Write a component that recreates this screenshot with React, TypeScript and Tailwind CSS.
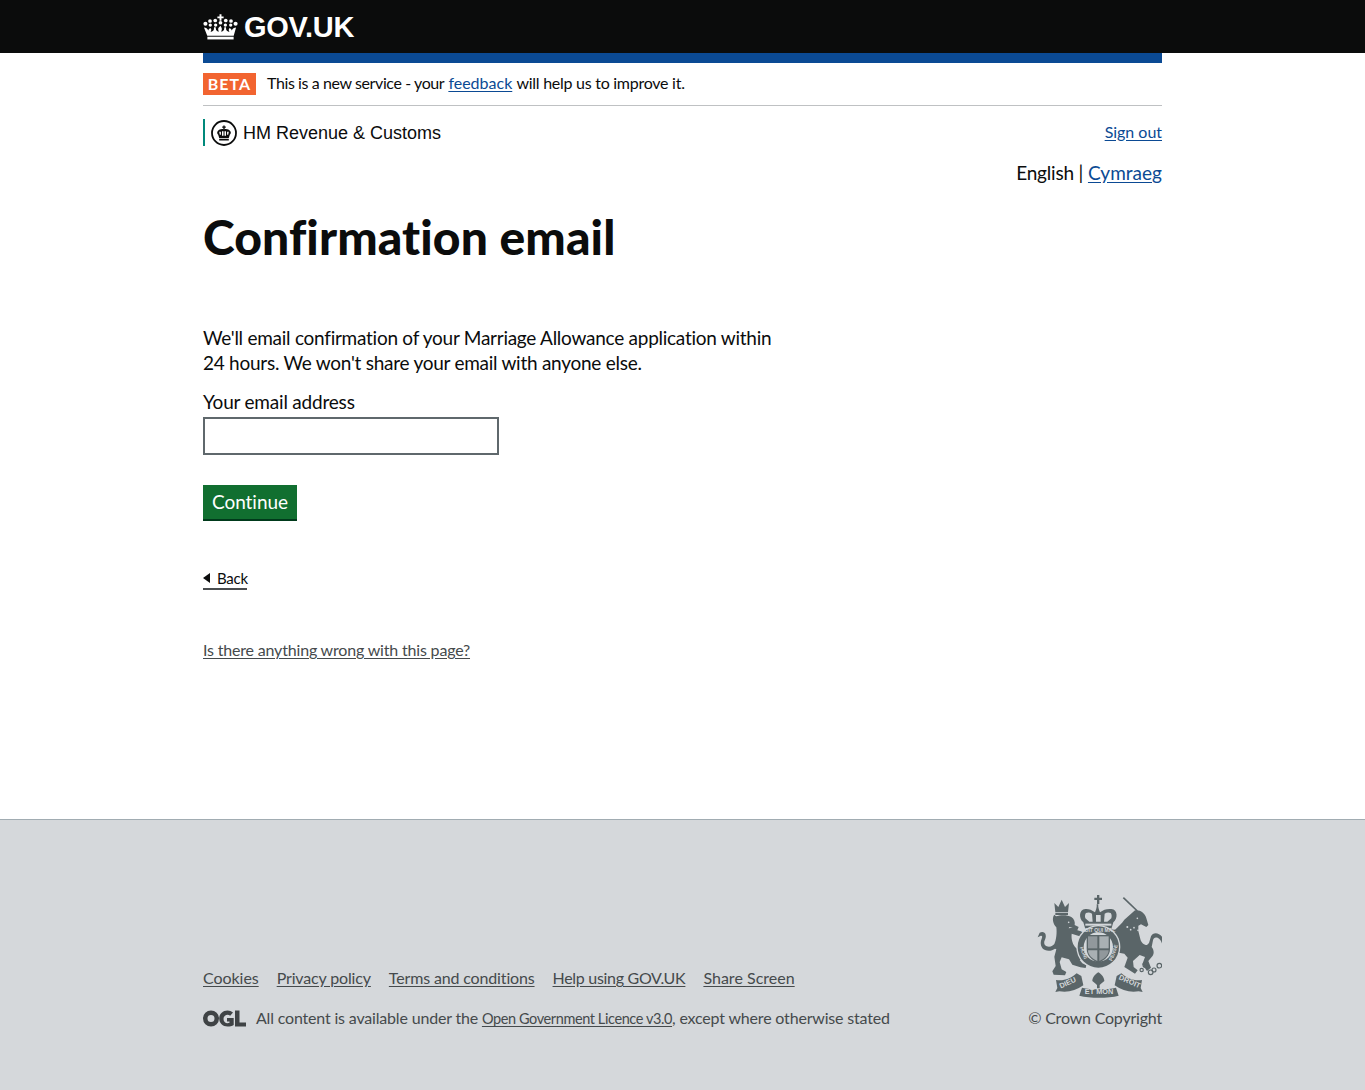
const Crown = ({ className }: { className?: string }) => (
  <svg viewBox="0 0 36 26" className={className} fill="currentColor">
    <path d="M17 0h2v2.200h2.200v1.900H19v2.400h-2V4.100h-2.200V2.200H17z" />
    <circle cx="18" cy="8.600" r="1.900" />
    <circle cx="12.600" cy="6.300" r="1.900" /><circle cx="23.400" cy="6.300" r="1.900" />
    <circle cx="7.200" cy="6.800" r="1.900" /><circle cx="28.800" cy="6.800" r="1.900" />
    <circle cx="2.500" cy="9.600" r="2.100" /><circle cx="33.500" cy="9.600" r="2.100" />
    <circle cx="7.500" cy="11" r="1.700" /><circle cx="28.500" cy="11" r="1.700" />
    <circle cx="13" cy="11" r="1.700" /><circle cx="23" cy="11" r="1.700" />
    <path d="M1 13.500c2 0 3.600 1.200 4.500 3 .3-1.500 1.200-2.400 2.600-2.300.7 1.400.4 2.800-.5 3.800 1.400 0 2.800-.8 3.500-2.200l.3-2.500h1.600l.4 2.500c.6 1.300 1.900 2.100 3.100 1.900-.8-1-1.100-2.200-.7-3.600L18 11.600l1.200 2.500c.4 1.400.1 2.600-.7 3.600 1.200.2 2.500-.6 3.100-1.900l.4-2.500h1.600l.3 2.500c.7 1.400 2.100 2.200 3.500 2.200-.9-1-1.200-2.400-.5-3.800 1.400-.1 2.300.8 2.600 2.300.9-1.800 2.500-3 4.500-3L31.600 22H4.400z" />
    <path d="M4.500 23h27v2.800h-27z" />
  </svg>
);

const HmrcCrest = () => (
  <svg viewBox="0 0 26 26" className="h-[26px] w-[26px] text-[#0b0c0c]" fill="none" stroke="currentColor">
    <circle cx="13" cy="13" r="12" strokeWidth="1.800" />
    <g fill="currentColor" stroke="none">
      <path d="M12.300 5.500h1.400v1.100h1.100v1.100h-1.100v1.500h-1.400V7.700h-1.100V6.600h1.100z" />
      <path d="M6.500 11.500c1.800-2.400 4.200-2.900 6.500-2.200 2.300-.7 4.700-.2 6.500 2.200.6 1.100.3 2.300-.7 3.300l-1.100 3.400H8.300l-1.100-3.400c-1-1-1.300-2.200-.7-3.300z" />
      <path d="M8.200 19h9.600v1.500H8.200z" />
    </g>
    <g fill="#ffffff" stroke="none">
      <path d="M8.200 11.800h1.700v3H8.800zM11 11.200h1.500v4.500H11zM13.500 11.200H15v4.500h-1.500zM16.100 11.800h1.700l-.6 3h-1.100z" />
    </g>
  </svg>
);

const RoyalArms = () => (
  <svg viewBox="48 30 378 312" className="h-[104px] w-[126px] text-[#5a6568]" fill="currentColor">
    {/* central crown */}
    <path d="M231 30h7v8h8v7h-8v12h-7V45h-8v-7h8z" />
    <path d="M196 72c-20 2-20 28-6 40l6 20h78l6-20c14-12 14-38-6-40-14-1-24 2-34 10-4-10-6-16-5-24h-5c1 8-1 14-5 24-10-8-20-11-30-10z" />
    <g fill="#d4d8db">
      <path d="M198 84c6-3 12-2 18 2l2 24h-10l-12-10c-2-6-1-13 2-16zM272 84c-6-3-12-2-18 2l-2 24h10l12-10c2-6 1-13-2-16zM228 90h14v20h-14z" />
    </g>
    <path d="M196 116h78v6h-78z" fill="#d4d8db" />
    {/* lion crown */}
    <path d="M103 54l12 12 10-22 10 22 12-12-3 28h-38z" />
    <path d="M106 84h38v6h-38z" />
    {/* lion */}
    <path d="M108 94c14-5 34-5 46 2 8 5 12 16 10 24l12 6-4 10 16 4-1 9-8 5-24-8c-2 18 4 34 14 44l20 9c6 6 8 14 4 22l-14 4 8 10 12 6-2 8-16-2-24-8-10-16-14-4-8-2-6 14 6 22 14 8-4 10-34-2-4-10 10-16-4-28 6-22-4-2c-8 6-20 8-30 4-12-6-16-20-10-34 4-8 0-10-4-8l-8 4 6-14c8-4 16-2 18 6 2 8-2 14-4 20-2 10 4 16 14 16 8 0 12-4 16-8 6-12 8-34 6-50-10-10-14-28-6-38z" />
    <g fill="#d4d8db">
      <circle cx="146" cy="112" r="2.500" />
      <path d="M158 128l-12 2 2-4z" />
    </g>
    {/* unicorn */}
    <path d="M310 38l42 40" fill="none" stroke="currentColor" strokeWidth="5" />
    <path d="M345 76c16-2 30 8 34 24l6 20-6 6-16-8-8 4 0 16 6 24c2 10 10 18 20 18l6-6 6-20c4-8 14-12 24-6 10 6 16 14 18 26l-2 12-6-2c0-12-6-22-14-26-8-2-12 0-14 8l-4 20c8 10 8 22 0 30l-10 12 8 20-12 10-14-20 8-22-16-6-20 18 2 18 12 10-8 10-32-20 10-28-10-12-32-6-4-20 14-16-4-10-24-6c-6-8-4-14 2-18l20 4c8-8 20-18 28-30z" />
    <g fill="#d4d8db">
      <circle cx="352" cy="100" r="2.500" />
      <circle cx="342" cy="128" r="2.500" />
      <circle cx="332" cy="134" r="2.500" />
      <circle cx="322" cy="126" r="3" />
      <circle cx="354" cy="136" r="2.500" />
    </g>
    <g fill="none" stroke="currentColor" strokeWidth="3.500">
      <circle cx="376" cy="240" r="7" />
      <circle cx="392" cy="262" r="7" />
      <circle cx="402" cy="255" r="6" />
      <circle cx="418" cy="242" r="7" />
      <circle cx="365" cy="255" r="5" />
    </g>
    {/* garter and shield */}
    <circle cx="235" cy="186" r="66" fill="#d4d8db" />
    <circle cx="235" cy="186" r="62" />
    <circle cx="235" cy="186" r="44" fill="#d4d8db" />
    <path d="M200 150h70v42c0 20-16 34-35 42-19-8-35-22-35-42z" />
    <g fill="#d4d8db">
      <path d="M204 154h28v36h-28z" opacity=".45" />
      <path d="M238 154h28v36h-28z" opacity=".65" />
      <path d="M204 196h28v32c-16-7-28-18-28-32z" opacity=".65" />
      <path d="M238 196h28c0 14-12 25-28 32z" opacity=".45" />
    </g>
    <g fill="#d4d8db" fontFamily="'Liberation Sans', sans-serif" fontSize="15" fontWeight="700" textAnchor="middle">
      <text x="235" y="142">SOIT QUI MAL</text>
      <text transform="translate(186 205) rotate(70)">HONI</text>
      <text transform="translate(285 205) rotate(-70)">PENSE</text>
    </g>
    {/* motto ribbon */}
    <path d="M108 285c22 4 44-4 62-20l14 8 6 28c-22 16-46 22-72 18l-12 2 6-12z" />
    <path d="M366 285c-22 4-44-4-62-20l-14 8-6 28c22 16 46 22 72 18l12 2-6-12z" />
    <path d="M186 308c26 6 76 6 102 0l8 24c-32 8-86 8-118 0z" />
    <path d="M235 262c10 6 18 16 18 26l-10 8-4 4v10h-8v-10l-4-4-10-8c0-10 8-20 18-26z" />
    <g fill="#d4d8db" fontFamily="'Liberation Sans', sans-serif" fontSize="22" fontWeight="700" textAnchor="middle">
      <text transform="translate(146 300) rotate(-24)">DIEU</text>
      <text x="237" y="328">ET MON</text>
      <text transform="translate(326 296) rotate(24)">DROIT</text>
    </g>
  </svg>
);

export default function App() {
  const footerLink = "text-[#454a4c] underline underline-offset-2";
  return (
    <div className="flex min-h-[1090px] flex-col bg-white font-['Lato','Noto_Sans',sans-serif] text-[#0b0c0c]">
      <header className="flex h-[53px] justify-center bg-[#0b0c0c]">
        <div className="flex w-[959px] items-center gap-[6px] text-white">
          <Crown className="h-[26px] w-[35px]" />
          <span className="mt-[1px] font-['Liberation_Sans',sans-serif] text-[29px] font-bold leading-none tracking-[-0.25px]">GOV.UK</span>
        </div>
      </header>

      <main className="mx-auto flex w-[959px] grow flex-col">
        <div className="h-[10px] bg-[#0b4a94]" />
        <div className="flex h-[43px] items-center gap-[11px] border-b border-[#bfc1c3] pb-[2px] text-[16px]">
          <strong className="mt-[2px] flex h-[22px] w-[53px] items-center justify-center bg-[#f26430] text-[16px] font-bold tracking-[1px] text-white">BETA</strong>
          <p><span className="tracking-[-0.4px]">This is a new service - your</span> <a href="#" className="text-[#0b4a94] underline underline-offset-2">feedback</a> <span className="tracking-[-0.26px]">will help us to improve it.</span></p>
        </div>

        <div className="mt-[13px] flex h-[27px] items-center justify-between">
          <div className="flex h-[27px] items-center gap-[6px] border-l-2 border-[#00897b] pl-[6px]">
            <HmrcCrest />
            <span className="font-['Liberation_Sans',sans-serif] text-[18px] leading-none">HM Revenue &amp; Customs</span>
          </div>
          <a href="#" className="mb-[2px] text-[16px] tracking-[-0.02px] text-[#0b4a94] underline underline-offset-2">Sign out</a>
        </div>

        <p className="mt-[14px] text-right text-[19px] leading-[25px]"><span className="tracking-[-0.2px]">English |</span> <a href="#" className="tracking-[0.02px] text-[#0b4a94] underline underline-offset-2">Cymraeg</a></p>

        <h1 className="mt-[27px] text-[48px] font-black leading-[50px] tracking-[0.1px]">Confirmation email</h1>

        <p className="mt-[63px] w-[590px] text-[19px] leading-[25px] tracking-[-0.26px]">We'll email confirmation of your Marriage Allowance application within 24 hours. We won't share your email with anyone else.</p>

        <label className="mt-[14px] block text-[19px] leading-[25px] tracking-[-0.2px]">Your email address</label>
        <input className="mt-[3px] block h-[38px] w-[296px] border-2 border-[#5f686c] bg-white" />

        <button className="mt-[30px] h-[36px] w-[94px] border-b-2 border-[#003a1b] bg-[#116f30] pb-[2px] text-[19px] leading-none tracking-[-0.05px] text-white">Continue</button>

        <a href="#" className="mt-[47px] flex w-[44px] items-center gap-[7px] border-b-2 border-[#4a4d4f] text-[15px] leading-[20px] tracking-[-0.25px]">
          <span className="h-0 w-0 border-y-[5px] border-r-[7px] border-y-transparent border-r-[#0b0c0c]" />
          Back
        </a>

        <a href="#" className="mt-[50px] w-fit text-[16px] leading-[20px] tracking-[-0.18px] text-[#454a4c] underline underline-offset-2">Is there anything wrong with this page?</a>
      </main>

      <footer className="flex h-[271px] justify-center border-t border-[#a1acb2] bg-[#d5d8db] text-[16px] text-[#454a4c]">
        <div className="flex w-[959px] items-end justify-between pb-[60px]">
          <div>
            <div className="flex gap-[18px]">
              <a href="#" className={`${footerLink} tracking-[-0.05px]`}>Cookies</a>
              <a href="#" className={`${footerLink} tracking-[-0.15px]`}>Privacy policy</a>
              <a href="#" className={`${footerLink} tracking-[-0.15px]`}>Terms and conditions</a>
              <a href="#" className={`${footerLink} tracking-[-0.3px]`}>Help using GOV.UK</a>
              <a href="#" className={`${footerLink} tracking-[0.02px]`}>Share Screen</a>
            </div>
            <div className="mt-[16px] flex items-center gap-[10px]">
              <svg viewBox="0 0 43 17" className="h-[17px] w-[43px] text-[#3f4345]" fill="currentColor">
                <path fillRule="evenodd" d="M8 .5a8 8 0 1 0 0 16 8 8 0 0 0 0-16zm0 4.500a3.500 3.500 0 1 1 0 7 3.500 3.500 0 0 1 0-7z" />
                <path d="M24.500.5c2.100 0 4 .7 5.500 2l-2.800 3.200c-.8-.6-1.700-1-2.700-1-2.200 0-4 1.800-4 4.300s1.800 4.300 4 4.300c.8 0 1.400-.2 2-.5v-1.300h-2.500V8h6.700v7c-1.700 1-3.800 1.500-6.200 1.500-4.700 0-8.300-3.500-8.300-8S19.800.5 24.500.5z" />
                <path d="M32 .5h4.500v12h6.500v4H32z" />
              </svg>
              <span className="tracking-[-0.18px]">All content is available under the <a href="#" className="text-[14.5px] tracking-[-0.4px] underline underline-offset-2">Open Government Licence v3.0</a>, except where otherwise stated</span>
            </div>
          </div>
          <div className="flex flex-col items-end">
            <RoyalArms />
            <span className="mt-[7px] tracking-[-0.2px]">© Crown Copyright</span>
          </div>
        </div>
      </footer>
    </div>
  );
}
